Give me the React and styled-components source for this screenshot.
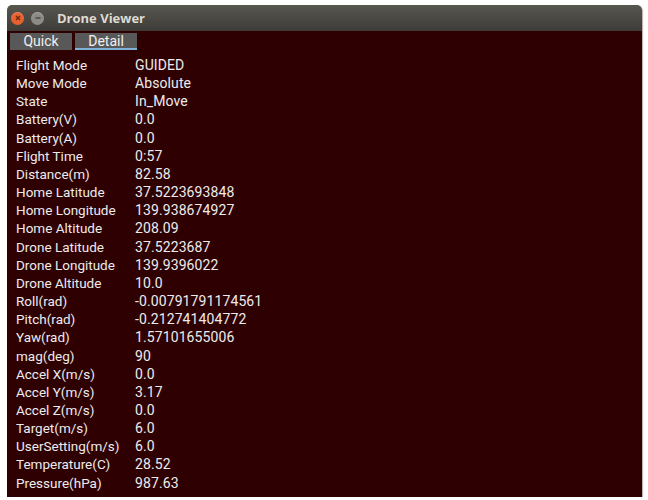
import React from 'react';
import styled, { createGlobalStyle } from 'styled-components';

const rows = [
  ['Flight Mode', 'GUIDED'],
  ['Move Mode', 'Absolute'],
  ['State', 'In_Move'],
  ['Battery(V)', '0.0'],
  ['Battery(A)', '0.0'],
  ['Flight Time', '0:57'],
  ['Distance(m)', '82.58'],
  ['Home Latitude', '37.5223693848'],
  ['Home Longitude', '139.938674927'],
  ['Home Altitude', '208.09'],
  ['Drone Latitude', '37.5223687'],
  ['Drone Longitude', '139.9396022'],
  ['Drone Altitude', '10.0'],
  ['Roll(rad)', '-0.00791791174561'],
  ['Pitch(rad)', '-0.212741404772'],
  ['Yaw(rad)', '1.57101655006'],
  ['mag(deg)', '90'],
  ['Accel X(m/s)', '0.0'],
  ['Accel Y(m/s)', '3.17'],
  ['Accel Z(m/s)', '0.0'],
  ['Target(m/s)', '6.0'],
  ['UserSetting(m/s)', '6.0'],
  ['Temperature(C)', '28.52'],
  ['Pressure(hPa)', '987.63'],
];

export default function App() {
  return (
    <>
      <GlobalStyle />
      <Window>
        <TitleBar>
          <WinButton $color="#e9602f">
            <svg width="6" height="6" viewBox="0 0 6 6">
              <path d="M1 1L5 5M5 1L1 5" stroke="#6b2410" strokeWidth="1.2" />
            </svg>
          </WinButton>
          <WinButton $color="#8c8b86">
            <svg width="6" height="6" viewBox="0 0 6 6">
              <path d="M0.5 3H5.5" stroke="#4a4945" strokeWidth="1.4" />
            </svg>
          </WinButton>
          <Title>Drone Viewer</Title>
        </TitleBar>
        <Body>
          <Tabs>
            <Tab>Quick</Tab>
            <Tab $active>Detail</Tab>
          </Tabs>
          <Table>
            {rows.map(([label, value]) => (
              <React.Fragment key={label}>
                <Cell $label>{label}</Cell>
                <Cell>{value}</Cell>
              </React.Fragment>
            ))}
          </Table>
        </Body>
      </Window>
    </>
  );
}

const GlobalStyle = createGlobalStyle`
  html, body {
    margin: 0;
    background: #ffffff;
  }
  body {
    padding: 5px 6px 0 7px;
    font-family: Roboto, "Liberation Sans", sans-serif;
  }
`;

const Window = styled.div`
  width: 635px;
  display: flex;
  flex-direction: column;
  border-radius: 5px 5px 0 0;
  overflow: hidden;
  box-shadow: 1px 1px 1px rgba(120, 90, 90, 0.5);
`;

const TitleBar = styled.div`
  height: 26px;
  display: flex;
  align-items: center;
  padding-left: 4px;
  gap: 7px;
  background: linear-gradient(#57564f, #3d3c38);
`;

const WinButton = styled.div`
  width: 13px;
  height: 13px;
  border-radius: 50%;
  background: ${(p) => p.$color};
  display: flex;
  align-items: center;
  justify-content: center;
  box-shadow: inset 0 1px 1px rgba(255, 255, 255, 0.25);
`;

const Title = styled.div`
  margin-left: 6px;
  color: #dfdbd2;
  font-family: "Open Sans", "Liberation Sans", sans-serif;
  font-weight: 700;
  font-size: 13px;
`;

const Body = styled.div`
  height: 464px;
  background: #2f0002;
  padding: 2px 3px 0;
`;

const Tabs = styled.div`
  display: flex;
  gap: 3px;
`;

const Tab = styled.div`
  width: 62px;
  height: 17px;
  box-sizing: border-box;
  background: #585858;
  color: #f0f0f0;
  font-size: 14px;
  line-height: 16px;
  text-align: center;
  border-bottom: 2px solid ${(p) => (p.$active ? '#7fb0d8' : '#585858')};
`;

const Table = styled.div`
  display: grid;
  grid-template-columns: 119px auto;
  grid-auto-rows: 18.17px;
  padding: 6px 0 0 6px;
`;

const Cell = styled.div`
  color: #ececec;
  font-size: ${(p) => (p.$label ? '13.5px' : '14px')};
  letter-spacing: ${(p) => (p.$label ? '0' : '0.1px')};
  line-height: 18px;
  white-space: nowrap;
`;
